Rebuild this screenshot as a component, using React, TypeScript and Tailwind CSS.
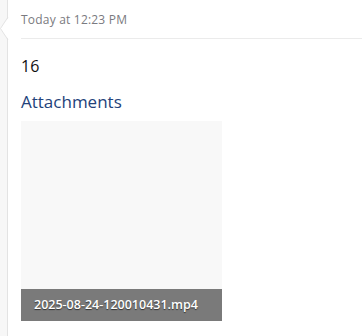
import React from 'react';

export default function App() {
  return (
    <div className="flex w-[362px] h-[336px] bg-white overflow-hidden" style={{ fontFamily: '"Open Sans", "Liberation Sans", sans-serif' }}>
      <div className="relative w-[8px] shrink-0 bg-[#f7f7f7] border-r border-[#e3e3e3]">
        <svg className="absolute left-0 top-[17px]" width="9" height="24" viewBox="0 0 9 24">
          <polygon points="9,0 0,11.5 9,23" fill="#ffffff" />
          <polyline points="8,0 0.5,11.5 8,23" fill="none" stroke="#e3e3e3" strokeWidth="1" />
        </svg>
      </div>
      <div className="flex-1 pl-[13px] flex flex-col">
        <div className="h-[39px] border-b border-[#ebebeb] flex items-center pt-[1px] text-[12px] text-[#7a7a80] tracking-[0.2px]">
          Today at 12:23 PM
        </div>
        <div className="mt-[16px] text-[16px] leading-[22px] text-[#111]">16</div>
        <div className="mt-[14px] text-[17px] leading-[22px] text-[#23427a]">Attachments</div>
        <div className="mt-[8px] w-[201px] h-[200px] bg-[#f8f8f8] flex flex-col justify-end">
          <div className="h-[32px] bg-[#7a7a7a] flex items-center pl-[13px] text-[12.5px] font-semibold text-white [text-shadow:0_1px_1px_rgba(0,0,0,0.6)]">
            2025-08-24-120010431.mp4
          </div>
        </div>
      </div>
    </div>
  );
}
